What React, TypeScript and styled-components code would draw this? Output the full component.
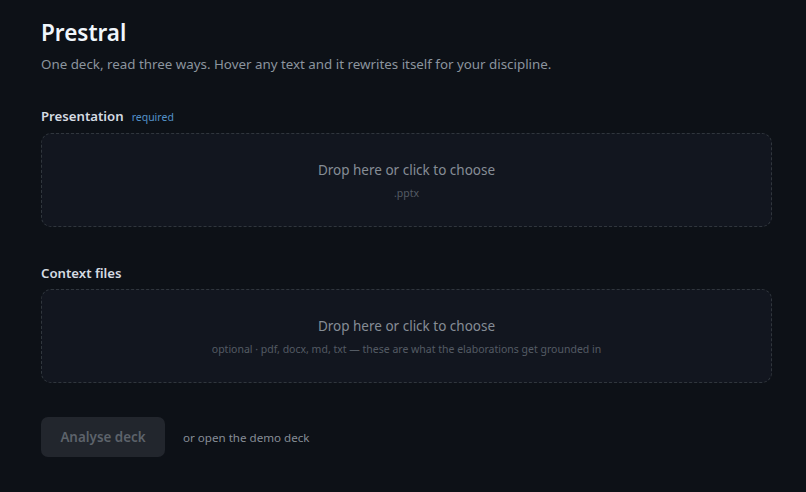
import styled, { createGlobalStyle } from 'styled-components';

const GlobalStyle = createGlobalStyle`
  html, body {
    margin: 0;
    padding: 0;
    background: #0d1117;
  }
  body {
    font-family: 'Noto Sans', 'Open Sans', sans-serif;
    color: #e6edf3;
  }
`;

interface DropZoneProps {
  hint: string;
}

const DropZone = ({ hint }: DropZoneProps) => (
  <Zone>
    <ZoneTitle>Drop here or click to choose</ZoneTitle>
    <ZoneHint>{hint}</ZoneHint>
  </Zone>
);

export default function App() {
  return (
    <>
      <GlobalStyle />
      <Page>
        <Header>
          <Title>Prestral</Title>
          <Subtitle>
            One deck, read three ways. Hover any text and it rewrites itself for
            your discipline.
          </Subtitle>
        </Header>

        <Section>
          <Label>
            Presentation <Required>required</Required>
          </Label>
          <DropZone hint=".pptx" />
        </Section>

        <Section>
          <Label>Context files</Label>
          <DropZone hint="optional · pdf, docx, md, txt — these are what the elaborations get grounded in" />
        </Section>

        <Actions>
          <Button disabled>Analyse deck</Button>
          <DemoLink>or open the demo deck</DemoLink>
        </Actions>
      </Page>
    </>
  );
}

const Page = styled.main`
  width: 731px;
  padding: 18px 0 0 41px;
  display: flex;
  flex-direction: column;
`;

const Header = styled.header`
  display: flex;
  flex-direction: column;
  gap: 6px;
  margin-bottom: 32px;
`;

const Title = styled.h1`
  margin: 0;
  font-size: 22.5px;
  font-weight: 600;
  line-height: 30px;
  color: #f0f6fc;
`;

const Subtitle = styled.p`
  margin: 0;
  font-size: 13.35px;
  line-height: 20px;
  color: #8b949e;
`;

const Section = styled.section`
  display: flex;
  flex-direction: column;
  gap: 6px;
  margin-bottom: 36px;

  &:last-of-type {
    margin-bottom: 34px;
  }
`;

const Label = styled.div`
  display: flex;
  align-items: baseline;
  gap: 8px;
  font-size: 13.2px;
  font-weight: 600;
  line-height: 20px;
  color: #d5dbe2;
`;

const Required = styled.span`
  font-size: 10.5px;
  font-weight: 400;
  color: #5391c9;
`;

const Zone = styled.div`
  height: 94px;
  box-sizing: border-box;
  border: 1px dashed #30363d;
  border-radius: 10px;
  background: #12161f;
  display: flex;
  flex-direction: column;
  align-items: center;
  justify-content: center;
  gap: 5px;
  cursor: pointer;
`;

const ZoneTitle = styled.div`
  font-size: 13.5px;
  line-height: 20px;
  color: #868d96;
`;

const ZoneHint = styled.div`
  font-size: 10.5px;
  line-height: 16px;
  color: #545b64;
`;

const Actions = styled.div`
  display: flex;
  align-items: center;
  gap: 18px;
`;

const Button = styled.button`
  height: 40px;
  width: 124px;
  border: none;
  border-radius: 7px;
  background: #22262d;
  color: #5d636b;
  font-family: inherit;
  font-size: 13.4px;
  font-weight: 600;
  cursor: not-allowed;
`;

const DemoLink = styled.span`
  font-size: 11.6px;
  color: #868d96;
  cursor: pointer;
`;
